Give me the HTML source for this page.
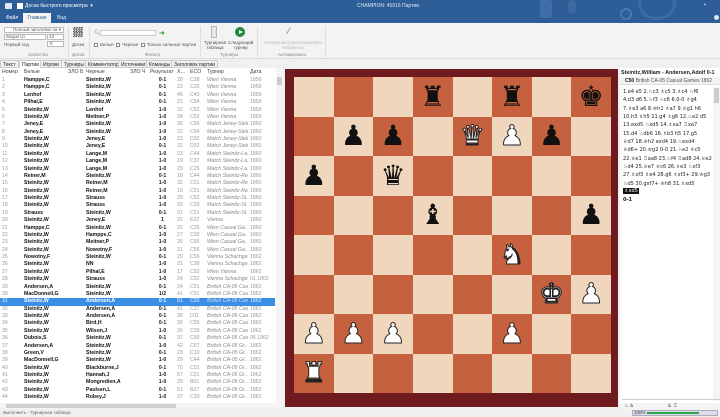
<!DOCTYPE html>
<html><head><meta charset="utf-8">
<style>
*{margin:0;padding:0;box-sizing:border-box}
body{width:720px;height:417px;overflow:hidden;background:#f0f0f0;font-family:"Liberation Sans","DejaVu Sans",sans-serif;position:relative;color:#222}
.a{position:absolute;white-space:nowrap}
#top{position:absolute;left:0;top:0;width:720px;height:23px;background:#2d5e98}
.t5{font-size:5px}
#rib{position:absolute;left:0;top:23px;width:720px;height:36px;background:#f3f3f3;border-bottom:1px solid #ddd}
.box{position:absolute;border:1px solid #bbb;background:#fff;height:6px}
.sep{position:absolute;top:26px;width:1px;height:31px;background:#ddd}
.gl{position:absolute;top:52px;font-size:4.5px;color:#888}
.cb{display:inline-block;width:4px;height:4px;border:1px solid #888;background:#fff;vertical-align:middle;margin-right:2px}
#tabs{position:absolute;left:0;top:60px;width:283px;height:8px;font-size:5px}
#tabs span{position:absolute;top:0;height:8px;line-height:8px;border:1px solid #ccc;padding:0 2px;background:#f0f0f0}
#list{position:absolute;left:0;top:68px;width:283px;height:335px;background:#fff}
table{border-collapse:collapse;table-layout:fixed;width:275px;font-size:5.2px}
td{height:7.38px;line-height:7.38px;padding:0 0 0 2px;overflow:hidden;white-space:nowrap}
tr.h td{height:9px;line-height:9px;color:#444}
td.b{font-weight:bold;color:#111}
td.r{font-weight:bold;text-align:center}
td.g{color:#999}
td.i{font-style:italic;color:#888}
tr.s td{background:#3a8ee6;color:#eaf3ff}
#board{position:absolute;left:285px;top:69px;width:333px;height:338px;background:#6e1a1f}
#sq{position:absolute;left:9px;top:8px;width:317px;height:316px;display:grid;grid-template-columns:repeat(8,39.625px);grid-template-rows:repeat(8,39.5px)}
#sq div{display:flex;align-items:center;justify-content:center;font-family:"DejaVu Sans",sans-serif;font-size:28px;line-height:1;overflow:hidden}
.L{background:#efd6bd}.D{background:#c6613f}
.k{color:#111}
.w{color:#fff;-webkit-text-stroke:1px #222}
#rp{position:absolute;left:620px;top:68px;width:100px;height:335px;background:#fff;font-size:5px}
#mv div{position:absolute;left:3px;font-size:5px;font-family:"DejaVu Sans",sans-serif;white-space:nowrap;color:#222}
</style></head><body>
<div id="top">
 <div class="a" style="left:5px;top:3px;width:7px;height:6px;background:#dfe8f3;border-radius:1px"></div>
 <div class="a" style="left:17px;top:3px;width:6px;height:6px;background:#fff"></div>
 <div class="a t5" style="left:25px;top:3px;color:#fff">Доска быстрого просмотра &nbsp;▾</div>
 <div class="a t5" style="left:357px;top:3px;color:#dfe8f3">CHAMPION: 45916 Партии</div>
 <div class="a" style="left:540px;top:0;width:12px;height:18px;background:#3f6fa6;border-radius:3px"></div>
 <div class="a" style="left:568px;top:0;width:8px;height:14px;background:#3a6aa0;border-radius:4px"></div>
 <div class="a" style="left:620px;top:8px;width:12px;height:12px;border:2px solid #4a7ab2;border-radius:50%"></div>
 <div class="a" style="left:638px;top:-14px;width:38px;height:34px;border:3px solid #3d6ca3;border-radius:50%"></div>
 <div class="a t5" style="left:704px;top:2px;color:#fff">▪</div>
 <div class="a" style="left:714px;top:15px;width:5px;height:5px;background:#dfe8f3;border-radius:50%"></div>
 <div class="a t5" style="left:6px;top:15px;color:#fff">Файл</div>
 <div class="a t5" style="left:23px;top:13px;width:28px;height:10px;background:#f3f3f3;color:#2d5e98;text-align:center;line-height:10px">Главная</div>
 <div class="a t5" style="left:57px;top:15px;color:#dfe8f3">Вид</div>
</div>
<div id="rib">
 <div class="box" style="left:4px;top:4px;width:60px;font-size:4.5px;line-height:4.5px;color:#555;padding-left:8px">Полный заголовок па ▾</div>
 <div class="box" style="left:4px;top:11px;width:42px;font-size:4.5px;line-height:4.5px;color:#555;padding-left:1px">Segoe UI</div>
 <div class="box" style="left:47px;top:11px;width:17px;font-size:4.5px;line-height:4.5px;color:#555;padding-left:1px">12</div>
 <div class="a" style="left:4px;top:19px;font-size:4.5px;color:#555">Первый ход</div>
 <div class="box" style="left:47px;top:18px;width:17px;font-size:4.5px;line-height:4.5px;color:#555;padding-left:2px">0</div>
 <div class="gl" style="left:28px;top:29px">Свойства</div>
 <div class="sep" style="left:68px;top:3px"></div>
 <div class="a" style="left:73px;top:4px;width:10px;height:10px;background:repeating-conic-gradient(#555 0 25%,#ddd 0 50%) 0 0/2.5px 2.5px"></div>
 <div class="a" style="left:72px;top:19px;font-size:4.5px;color:#555">Доска</div>
 <div class="gl" style="left:72px;top:29px">Доска</div>
 <div class="sep" style="left:89px;top:3px"></div>
 <div class="a" style="left:94px;top:7px;font-size:5px;color:#777">🔍︎</div>
 <div class="box" style="left:100px;top:7px;width:56px;height:6px;border-color:#ccc"></div>
 <div class="a" style="left:159px;top:6px;color:#2a9a3a;font-size:7px">➜</div>
 <div class="a" style="left:94px;top:19px;font-size:4.5px;color:#555"><span class="cb"></span>Белые &nbsp;<span class="cb"></span>Черные &nbsp;<span class="cb"></span>Только сильные партии</div>
 <div class="gl" style="left:145px;top:29px">Фильтр</div>
 <div class="sep" style="left:200px;top:3px"></div>
 <div class="a" style="left:211px;top:3px;width:6px;height:12px;border:1px solid #bbb;background:#e6e6e6"></div>
 <div class="a" style="left:235px;top:4px;width:10px;height:10px;border-radius:50%;background:#1e8a3a"></div>
 <div class="a" style="left:239px;top:6.5px;width:0;height:0;border-left:4px solid #fff;border-top:2.5px solid transparent;border-bottom:2.5px solid transparent"></div>
 <div class="a" style="left:204px;top:17px;font-size:4.5px;color:#555;text-align:center;line-height:5px">Турнирная<br>таблица</div>
 <div class="a" style="left:228px;top:17px;font-size:4.5px;color:#555;text-align:center;line-height:5px">Следующий<br>турнир</div>
 <div class="gl" style="left:220px;top:29px">Турниры</div>
 <div class="sep" style="left:257px;top:3px"></div>
 <div class="a" style="left:288px;top:3px;font-size:9px;color:#666">⁄</div>
 <div class="a" style="left:258px;top:17px;font-size:4.2px;color:#bbb;text-align:center;line-height:5px;width:70px">Активировать/деактивировать<br>Избранные</div>
 <div class="gl" style="left:278px;top:29px">Активировать</div>
 <div class="sep" style="left:325px;top:3px"></div>
</div>
<div id="tabs">
 <span style="left:0">Текст</span><span style="left:19px;background:#fff;border-bottom-color:#fff">Партии</span><span style="left:40px">Игроки</span><span style="left:61px">Турниры</span><span style="left:85px">Комментатор</span><span style="left:118px">Источники</span><span style="left:146px">Команды</span><span style="left:171px">Заголовок партии</span>
</div>
<div id="list">
<table>
<colgroup><col style="width:22px"><col style="width:44px"><col style="width:18px"><col style="width:44px"><col style="width:20px"><col style="width:27px"><col style="width:13px"><col style="width:17px"><col style="width:43px"><col style="width:27px"></colgroup>
<tr class="h"><td>Номер</td><td>Белые</td><td>ЗЛО Б</td><td>Черные</td><td>ЗЛО Ч</td><td>Результат</td><td>Х...</td><td>ECO</td><td>Турнир</td><td>Дата</td></tr>
<tr><td class="g">1</td><td class="b">Hamppe,C</td><td></td><td class="b">Steinitz,W</td><td></td><td class="r">0-1</td><td class="g">28</td><td class="g">C38</td><td class="i">Wien Vienna</td><td class="g">1859</td></tr>
<tr><td class="g">2</td><td class="b">Hamppe,C</td><td></td><td class="b">Steinitz,W</td><td></td><td class="r">0-1</td><td class="g">23</td><td class="g">C29</td><td class="i">Wien Vienna</td><td class="g">1859</td></tr>
<tr><td class="g">3</td><td class="b">Lenhof</td><td></td><td class="b">Steinitz,W</td><td></td><td class="r">0-1</td><td class="g">45</td><td class="g">C40</td><td class="i">Wien Vienna</td><td class="g">1859</td></tr>
<tr><td class="g">4</td><td class="b">Pilhal,E</td><td></td><td class="b">Steinitz,W</td><td></td><td class="r">0-1</td><td class="g">21</td><td class="g">C54</td><td class="i">Wien Vienna</td><td class="g">1859</td></tr>
<tr><td class="g">5</td><td class="b">Steinitz,W</td><td></td><td class="b">Lenhof</td><td></td><td class="r">1-0</td><td class="g">32</td><td class="g">C52</td><td class="i">Wien Vienna</td><td class="g">1859</td></tr>
<tr><td class="g">6</td><td class="b">Steinitz,W</td><td></td><td class="b">Meitner,P</td><td></td><td class="r">1-0</td><td class="g">34</td><td class="g">C52</td><td class="i">Wien Vienna</td><td class="g">1859</td></tr>
<tr><td class="g">7</td><td class="b">Jeney,E</td><td></td><td class="b">Steinitz,W</td><td></td><td class="r">1-0</td><td class="g">35</td><td class="g">C56</td><td class="i">Match Jeney-Steit..</td><td class="g">1860</td></tr>
<tr><td class="g">8</td><td class="b">Jeney,E</td><td></td><td class="b">Steinitz,W</td><td></td><td class="r">1-0</td><td class="g">22</td><td class="g">C54</td><td class="i">Match Jeney-Steit..</td><td class="g">1860</td></tr>
<tr><td class="g">9</td><td class="b">Steinitz,W</td><td></td><td class="b">Jeney,E</td><td></td><td class="r">1-0</td><td class="g">33</td><td class="g">D32</td><td class="i">Match Jeney-Steit..</td><td class="g">1860</td></tr>
<tr><td class="g">10</td><td class="b">Steinitz,W</td><td></td><td class="b">Jeney,E</td><td></td><td class="r">0-1</td><td class="g">32</td><td class="g">D32</td><td class="i">Match Jeney-Steit..</td><td class="g">1860</td></tr>
<tr><td class="g">11</td><td class="b">Steinitz,W</td><td></td><td class="b">Lange,M</td><td></td><td class="r">1-0</td><td class="g">23</td><td class="g">C44</td><td class="i">Match Steinitz-La..</td><td class="g">1860</td></tr>
<tr><td class="g">12</td><td class="b">Steinitz,W</td><td></td><td class="b">Lange,M</td><td></td><td class="r">1-0</td><td class="g">19</td><td class="g">C37</td><td class="i">Match Steinitz-La..</td><td class="g">1860</td></tr>
<tr><td class="g">13</td><td class="b">Steinitz,W</td><td></td><td class="b">Lange,M</td><td></td><td class="r">1-0</td><td class="g">29</td><td class="g">C25</td><td class="i">Match Steinitz-La..</td><td class="g">1860</td></tr>
<tr><td class="g">14</td><td class="b">Reiner,M</td><td></td><td class="b">Steinitz,W</td><td></td><td class="r">0-1</td><td class="g">18</td><td class="g">C44</td><td class="i">Match Steinitz-Re..</td><td class="g">1860</td></tr>
<tr><td class="g">15</td><td class="b">Steinitz,W</td><td></td><td class="b">Reiner,M</td><td></td><td class="r">1-0</td><td class="g">32</td><td class="g">C51</td><td class="i">Match Steinitz-Re..</td><td class="g">1860</td></tr>
<tr><td class="g">16</td><td class="b">Steinitz,W</td><td></td><td class="b">Reiner,M</td><td></td><td class="r">1-0</td><td class="g">19</td><td class="g">C51</td><td class="i">Match Steinitz-Re..</td><td class="g">1860</td></tr>
<tr><td class="g">17</td><td class="b">Steinitz,W</td><td></td><td class="b">Strauss</td><td></td><td class="r">1-0</td><td class="g">29</td><td class="g">C52</td><td class="i">Match Steinitz-St..</td><td class="g">1860</td></tr>
<tr><td class="g">18</td><td class="b">Steinitz,W</td><td></td><td class="b">Strauss</td><td></td><td class="r">1-0</td><td class="g">33</td><td class="g">C29</td><td class="i">Match Steinitz-St..</td><td class="g">1860</td></tr>
<tr><td class="g">19</td><td class="b">Strauss</td><td></td><td class="b">Steinitz,W</td><td></td><td class="r">0-1</td><td class="g">31</td><td class="g">C51</td><td class="i">Match Steinitz-St..</td><td class="g">1860</td></tr>
<tr><td class="g">20</td><td class="b">Steinitz,W</td><td></td><td class="b">Jeney,E</td><td></td><td class="r">1</td><td class="g">31</td><td class="g">E22</td><td class="i">Vienna</td><td class="g">1860</td></tr>
<tr><td class="g">21</td><td class="b">Hamppe,C</td><td></td><td class="b">Steinitz,W</td><td></td><td class="r">0-1</td><td class="g">31</td><td class="g">C25</td><td class="i">Wien Casual Ga..</td><td class="g">1860</td></tr>
<tr><td class="g">22</td><td class="b">Steinitz,W</td><td></td><td class="b">Hamppe,C</td><td></td><td class="r">1-0</td><td class="g">27</td><td class="g">C30</td><td class="i">Wien Casual Ga..</td><td class="g">1860</td></tr>
<tr><td class="g">23</td><td class="b">Steinitz,W</td><td></td><td class="b">Meitner,P</td><td></td><td class="r">1-0</td><td class="g">26</td><td class="g">C56</td><td class="i">Wien Casual Ga..</td><td class="g">1860</td></tr>
<tr><td class="g">24</td><td class="b">Steinitz,W</td><td></td><td class="b">Nowotny,F</td><td></td><td class="r">1-0</td><td class="g">31</td><td class="g">C56</td><td class="i">Wien Casual Ga..</td><td class="g">1860</td></tr>
<tr><td class="g">25</td><td class="b">Nowotny,F</td><td></td><td class="b">Steinitz,W</td><td></td><td class="r">0-1</td><td class="g">29</td><td class="g">C56</td><td class="i">Vienna Schachge..</td><td class="g">1862</td></tr>
<tr><td class="g">26</td><td class="b">Steinitz,W</td><td></td><td class="b">NN</td><td></td><td class="r">1-0</td><td class="g">31</td><td class="g">C30</td><td class="i">Vienna Schachge..</td><td class="g">1862</td></tr>
<tr><td class="g">27</td><td class="b">Steinitz,W</td><td></td><td class="b">Pilhal,E</td><td></td><td class="r">1-0</td><td class="g">17</td><td class="g">C52</td><td class="i">Wien Vienna</td><td class="g">1862</td></tr>
<tr><td class="g">28</td><td class="b">Steinitz,W</td><td></td><td class="b">Strauss</td><td></td><td class="r">1-0</td><td class="g">24</td><td class="g">C52</td><td class="i">Vienna Schachge..</td><td class="g">01.1862</td></tr>
<tr><td class="g">29</td><td class="b">Andersen,A</td><td></td><td class="b">Steinitz,W</td><td></td><td class="r">0-1</td><td class="g">24</td><td class="g">C51</td><td class="i">British CA-05 Cas..</td><td class="g">1862</td></tr>
<tr><td class="g">30</td><td class="b">MacDonnell,G</td><td></td><td class="b">Steinitz,W</td><td></td><td class="r">1/2</td><td class="g">41</td><td class="g">C51</td><td class="i">British CA-05 Cas..</td><td class="g">1862</td></tr>
<tr class="s"><td>31</td><td class="b" style="color:#fff">Steinitz,W</td><td></td><td class="b" style="color:#fff">Andersen,A</td><td></td><td class="r">0-1</td><td>51</td><td>C50</td><td class="i" style="color:#dde">British CA-05 Cas..</td><td>1862</td></tr>
<tr><td class="g">32</td><td class="b">Steinitz,W</td><td></td><td class="b">Andersen,A</td><td></td><td class="r">0-1</td><td class="g">41</td><td class="g">C37</td><td class="i">British CA-05 Cas..</td><td class="g">1862</td></tr>
<tr><td class="g">33</td><td class="b">Steinitz,W</td><td></td><td class="b">Andersen,A</td><td></td><td class="r">0-1</td><td class="g">38</td><td class="g">D11</td><td class="i">British CA-05 Cas..</td><td class="g">1862</td></tr>
<tr><td class="g">34</td><td class="b">Steinitz,W</td><td></td><td class="b">Bird,H</td><td></td><td class="r">0-1</td><td class="g">30</td><td class="g">C55</td><td class="i">British CA-05 Cas..</td><td class="g">1862</td></tr>
<tr><td class="g">35</td><td class="b">Steinitz,W</td><td></td><td class="b">Wilson,J</td><td></td><td class="r">1-0</td><td class="g">20</td><td class="g">C39</td><td class="i">British CA-05 Cas..</td><td class="g">1862</td></tr>
<tr><td class="g">36</td><td class="b">Dubois,S</td><td></td><td class="b">Steinitz,W</td><td></td><td class="r">0-1</td><td class="g">37</td><td class="g">C50</td><td class="i">British CA-05 Cas..</td><td class="g">06.1862</td></tr>
<tr><td class="g">37</td><td class="b">Andersen,A</td><td></td><td class="b">Steinitz,W</td><td></td><td class="r">1-0</td><td class="g">42</td><td class="g">C67</td><td class="i">British CA-05 Gr..</td><td class="g">1862</td></tr>
<tr><td class="g">38</td><td class="b">Green,V</td><td></td><td class="b">Steinitz,W</td><td></td><td class="r">0-1</td><td class="g">23</td><td class="g">C10</td><td class="i">British CA-05 Gr..</td><td class="g">1862</td></tr>
<tr><td class="g">39</td><td class="b">MacDonnell,G</td><td></td><td class="b">Steinitz,W</td><td></td><td class="r">1-0</td><td class="g">29</td><td class="g">C44</td><td class="i">British CA-05 Gr..</td><td class="g">1862</td></tr>
<tr><td class="g">40</td><td class="b">Steinitz,W</td><td></td><td class="b">Blackburne,J</td><td></td><td class="r">0-1</td><td class="g">70</td><td class="g">C01</td><td class="i">British CA-05 Gr..</td><td class="g">1862</td></tr>
<tr><td class="g">41</td><td class="b">Steinitz,W</td><td></td><td class="b">Hannah,J</td><td></td><td class="r">1-0</td><td class="g">57</td><td class="g">C01</td><td class="i">British CA-05 Gr..</td><td class="g">1862</td></tr>
<tr><td class="g">42</td><td class="b">Steinitz,W</td><td></td><td class="b">Mongredien,A</td><td></td><td class="r">1-0</td><td class="g">29</td><td class="g">B01</td><td class="i">British CA-05 Gr..</td><td class="g">1862</td></tr>
<tr><td class="g">43</td><td class="b">Steinitz,W</td><td></td><td class="b">Paulsen,L</td><td></td><td class="r">0-1</td><td class="g">51</td><td class="g">B27</td><td class="i">British CA-05 Gr..</td><td class="g">1862</td></tr>
<tr><td class="g">44</td><td class="b">Steinitz,W</td><td></td><td class="b">Robey,J</td><td></td><td class="r">1-0</td><td class="g">37</td><td class="g">C30</td><td class="i">British CA-05 Gr..</td><td class="g">1862</td></tr>
</table>
<div class="a" style="left:276px;top:0;width:7px;height:335px;background:#f4f4f4"></div>
<div class="a" style="left:277px;top:9px;width:5px;height:8px;background:#ccc"></div>
</div>
<div class="a" style="left:0;top:403px;width:283px;height:6px;background:#f4f4f4"></div>
<div class="a" style="left:6px;top:404px;width:170px;height:4px;background:#cfcfcf"></div>
<div class="a" style="left:3px;top:410px;font-size:4.5px;color:#666">Выполнить - Турнирная таблица</div>

<div id="board"><div id="sq">
<div class="L"></div><div class="D"></div><div class="L"></div><div class="D k">♜</div><div class="L"></div><div class="D k">♜</div><div class="L"></div><div class="D k">♚</div>
<div class="D"></div><div class="L k">♟</div><div class="D k">♟</div><div class="L"></div><div class="D w">♛</div><div class="L w">♟</div><div class="D k">♟</div><div class="L"></div>
<div class="L k">♟</div><div class="D"></div><div class="L k">♛</div><div class="D"></div><div class="L"></div><div class="D"></div><div class="L"></div><div class="D"></div>
<div class="D"></div><div class="L"></div><div class="D"></div><div class="L k">♝</div><div class="D"></div><div class="L"></div><div class="D"></div><div class="L k">♟</div>
<div class="L"></div><div class="D"></div><div class="L"></div><div class="D"></div><div class="L"></div><div class="D w">♞</div><div class="L"></div><div class="D"></div>
<div class="D"></div><div class="L"></div><div class="D"></div><div class="L"></div><div class="D"></div><div class="L"></div><div class="D w">♚</div><div class="L w">♟</div>
<div class="L w">♟</div><div class="D w">♟</div><div class="L w">♟</div><div class="D"></div><div class="L"></div><div class="D w">♟</div><div class="L"></div><div class="D"></div>
<div class="D w">♜</div><div class="L"></div><div class="D"></div><div class="L"></div><div class="D"></div><div class="L"></div><div class="D"></div><div class="L"></div>
</div></div>

<div id="rp">
 <div class="a" style="left:1px;top:2px;font-size:5.4px;font-weight:bold">Steinitz,William - Andersen,Adolf 0-1</div>
 <div class="a" style="left:0;top:9px;width:100px;height:8px;background:#f2f2f2;border-bottom:1px solid #ddd"></div>
 <div class="a" style="left:5px;top:10px;font-size:5px"><b>C50</b> <span style="color:#555">British CA-05 Casual Games 1862</span></div>
 <div id="mv">
 <div style="top:21px">1.e4 e5 2.♘c3 ♗c5 3.♗c4 ♘f6</div>
 <div style="top:29px">4.d3 d6 5.♘f3 ♘c6 6.0-0 ♗g4</div>
 <div style="top:37.5px">7.♗e3 a6 8.♔h1 ♗a7 9.♕g1 h6</div>
 <div style="top:46px">10.h3 ♗h5 11.g4 ♗g6 12.♘e2 d5</div>
 <div style="top:54px">13.exd5 ♘xd5 14.♗xa7 ♖xa7</div>
 <div style="top:62.5px">15.d4 ♘db6 16.♗b3 h5 17.g5</div>
 <div style="top:71px">♕d7 18.♔h2 exd4 19.♘exd4</div>
 <div style="top:79px">♕d6+ 20.♔g2 0-0 21.♘e2 ♕c5</div>
 <div style="top:87.5px">22.♕e1 ♖aa8 23.♘f4 ♖ad8 24.♕e2</div>
 <div style="top:96px">♘d4 25.♕e7 ♕c6 26.♗e3 ♘xf3</div>
 <div style="top:104px">27.♗xf3 ♗e4 28.g6 ♗xf3+ 29.♔g3</div>
 <div style="top:112.5px">♘d5 30.gxf7+ ♔h8 31.♗xd5</div>
 <div style="top:120px;background:#111;color:#fff;padding:0 1px">♗xd5</div>
 <div style="top:129px;font-weight:bold">0-1</div>
 </div>
 <div class="a" style="left:93px;top:19px;width:7px;height:314px;background:#f4f4f4"></div>
 <div class="a" style="left:94px;top:20px;width:5px;height:15px;background:#ccc"></div>
 <div class="a" style="left:2px;top:331px;width:98px;height:1px;background:#ccc"></div>
</div>
<div class="a" style="left:620px;top:403px;width:100px;height:7px;background:#f4f4f4"></div>
<div class="a" style="left:625px;top:403px;font-size:5px;color:#333">⌂ ♙ &nbsp;&nbsp;&nbsp;&nbsp;&nbsp;&nbsp;&nbsp;&nbsp;&nbsp;&nbsp;&nbsp;&nbsp;&nbsp;&nbsp;&nbsp;&nbsp;&nbsp;&nbsp;&nbsp;&nbsp;&nbsp;&nbsp;&nbsp;♙ ♖</div>
<div class="a" style="left:632px;top:410px;width:86px;height:6px;background:#dcdcf0;border:1px solid #aab"></div>
<div class="a" style="left:634px;top:410px;font-size:4.5px;color:#333">100%</div>
<div class="a" style="left:647px;top:412px;width:52px;height:2px;background:#2aa24a"></div>
</body></html>
